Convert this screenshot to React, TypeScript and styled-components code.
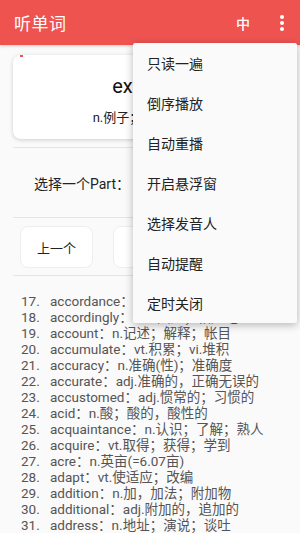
import React from "react";
import styled, { createGlobalStyle } from "styled-components";

const GlobalStyle = createGlobalStyle`
  html, body {
    margin: 0;
    padding: 0;
    background: #fafafa;
  }
  body {
    font-family: Roboto, "Noto Sans CJK SC", sans-serif;
  }
`;

const Page = styled.div`
  position: relative;
  width: 300px;
  height: 533px;
  overflow: hidden;
  background: #fafafa;
  display: flex;
  flex-direction: column;

  & > * {
    flex-shrink: 0;
  }
`;

const AppBar = styled.header`
  height: 45px;
  background: #ef5350;
  display: flex;
  align-items: center;
  padding: 0 0 0 14px;
  box-shadow: 0 1px 3px rgba(0, 0, 0, 0.2);
  color: #fff;
`;

const Title = styled.div`
  font-size: 17px;
  flex: 1;
  letter-spacing: 0.5px;
`;

const LangButton = styled.div`
  font-size: 14px;
  font-weight: 500;
  width: 24px;
  text-align: center;
  margin-right: 15px;
`;

const MoreButton = styled.div`
  width: 24px;
  height: 45px;
  margin-right: 6px;
  display: flex;
  align-items: center;
  justify-content: center;
`;

const Card = styled.div`
  margin: 10px 13px 0;
  height: 84px;
  background: #fff;
  border-radius: 8px;
  box-shadow: 0 1px 4px rgba(0, 0, 0, 0.18);
  display: flex;
  flex-direction: column;
  align-items: center;
  position: relative;
`;

const Progress = styled.div`
  position: absolute;
  top: 0;
  left: 7px;
  width: 3px;
  height: 2px;
  background: #ef5350;
`;

const Word = styled.div`
  font-size: 20px;
  color: #111;
  margin-top: 17px;
  line-height: 28px;
`;

const Meaning = styled.div`
  font-size: 13px;
  color: #222;
  margin-top: 10px;
  line-height: 16px;
`;

const Divider = styled.div<{ $top: number }>`
  height: 1px;
  background: #e4e4e4;
  margin: ${(p) => p.$top}px 13px 0;
`;

const PartRow = styled.div`
  height: 69px;
  display: flex;
  align-items: center;
  padding-left: 34px;
  font-size: 14px;
  color: #222;
`;

const PartSelect = styled.div`
  margin-left: 10px;
  width: 1px;
  height: 14px;
  background: #555;
`;

const ButtonRow = styled.div`
  display: flex;
  gap: 20px;
  padding: 8px 0 0 20px;
`;

const NavButton = styled.div`
  width: 73px;
  height: 42px;
  background: #fff;
  border: 1px solid #eee;
  box-sizing: border-box;
  border-radius: 8px;
  display: flex;
  align-items: center;
  justify-content: center;
  font-size: 13px;
  color: #222;
`;

const WordList = styled.ol`
  list-style: none;
  margin: 17px 0 0;
  padding: 0 0 0 21px;
  font-size: 13.5px;
  line-height: 16px;
  color: #555;
  flex-shrink: 1 !important;
  min-height: 0;
  overflow: hidden;
`;

const WordItem = styled.li`
  display: flex;
  white-space: nowrap;
`;

const Num = styled.span`
  width: 29px;
  flex-shrink: 0;
`;

const Menu = styled.div`
  position: absolute;
  top: 43px;
  right: 3px;
  width: 164px;
  background: #fafafa;
  border-radius: 2px;
  box-shadow: 0 2px 8px rgba(0, 0, 0, 0.28);
  z-index: 10;
`;

const MenuItem = styled.div`
  height: 40px;
  display: flex;
  align-items: center;
  padding-left: 14px;
  font-size: 14px;
  color: #222;
`;

const words: [number, string][] = [
  [17, "accordance：n.一致；和谐"],
  [18, "accordingly：adv.因此；相应地"],
  [19, "account：n.记述；解释；帐目"],
  [20, "accumulate：vt.积累；vi.堆积"],
  [21, "accuracy：n.准确(性)；准确度"],
  [22, "accurate：adj.准确的，正确无误的"],
  [23, "accustomed：adj.惯常的；习惯的"],
  [24, "acid：n.酸；酸的，酸性的"],
  [25, "acquaintance：n.认识；了解；熟人"],
  [26, "acquire：vt.取得；获得；学到"],
  [27, "acre：n.英亩(=6.07亩)"],
  [28, "adapt：vt.使适应；改编"],
  [29, "addition：n.加，加法；附加物"],
  [30, "additional：adj.附加的，追加的"],
  [31, "address：n.地址；演说；谈吐"],
  [32, "adequate：adj.足够的；适当的"],
];

const menuItems = ["只读一遍", "倒序播放", "自动重播", "开启悬浮窗", "选择发音人", "自动提醒", "定时关闭"];

export default function App() {
  return (
    <Page>
      <GlobalStyle />
      <AppBar>
        <Title>听单词</Title>
        <LangButton>中</LangButton>
        <MoreButton>
          <svg width="6" height="18" viewBox="0 0 6 18">
            <circle cx="3" cy="3" r="2" fill="#fff" />
            <circle cx="3" cy="9" r="2" fill="#fff" />
            <circle cx="3" cy="15" r="2" fill="#fff" />
          </svg>
        </MoreButton>
      </AppBar>

      <Card>
        <Progress />
        <Word>example</Word>
        <Meaning>n.例子；榜样；模范</Meaning>
      </Card>

      <Divider $top={8} />
      <PartRow>
        选择一个Part：
        <PartSelect />
      </PartRow>
      <Divider $top={0} />

      <ButtonRow>
        <NavButton>上一个</NavButton>
        <NavButton>暂停</NavButton>
        <NavButton>下一个</NavButton>
      </ButtonRow>
      <Divider $top={7} />

      <WordList>
        {words.map(([n, text]) => (
          <WordItem key={n}>
            <Num>{n}.</Num>
            <span>{text}</span>
          </WordItem>
        ))}
      </WordList>

      <Menu>
        {menuItems.map((m) => (
          <MenuItem key={m}>{m}</MenuItem>
        ))}
      </Menu>
    </Page>
  );
}
